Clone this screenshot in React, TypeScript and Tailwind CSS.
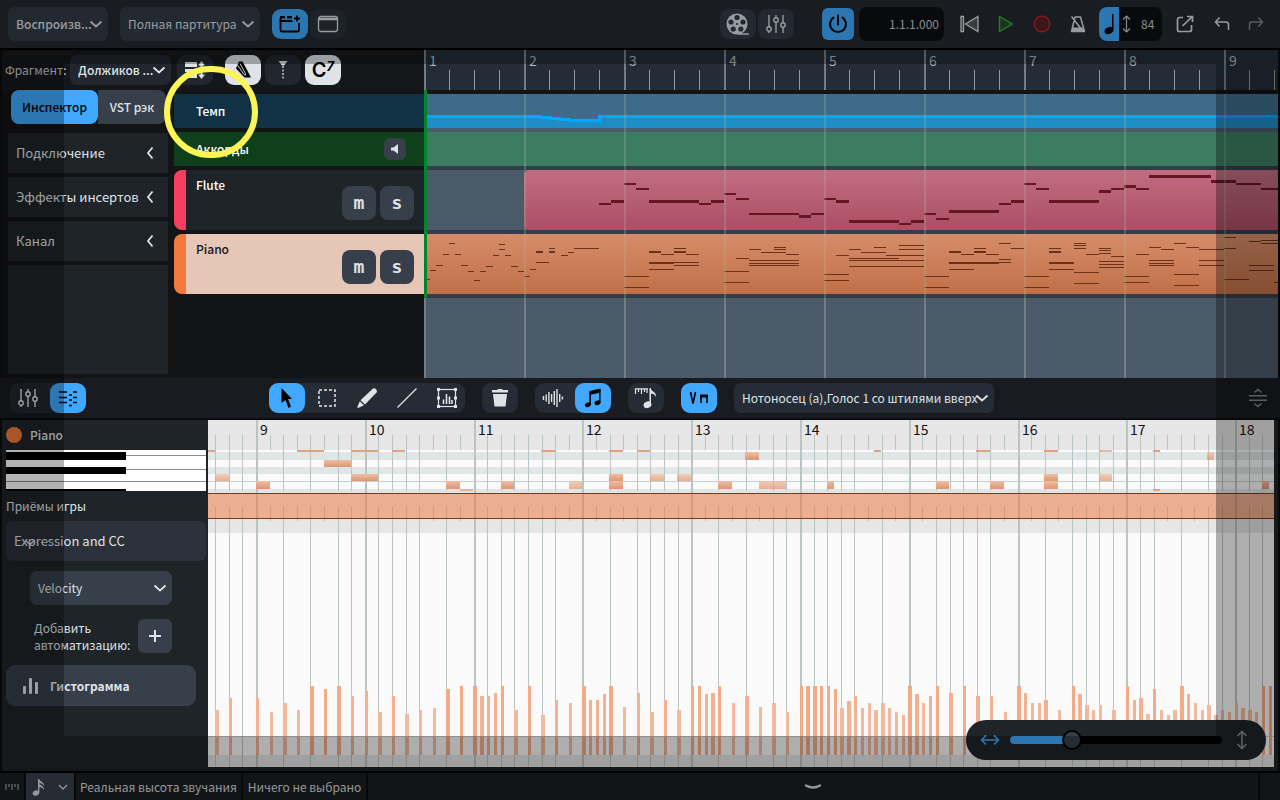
import React, { useState } from "react";

type Note = [number, number, number, number?];

const FLUTE: Note[] = [
  [599, 203, 12], [611, 200, 13, 3], [624, 183, 12], [636, 188, 13], [649, 200, 50, 3], [699, 203, 12],
  [711, 200, 13, 3], [724, 193, 12], [736, 198, 13], [749, 213, 50], [799, 215, 12, 3], [811, 213, 13],
  [824, 198, 12], [836, 200, 13, 3], [849, 220, 50, 3], [899, 223, 12], [911, 220, 13, 3], [924, 213, 12],
  [936, 218, 13], [949, 210, 50, 3], [999, 203, 12], [1011, 200, 13, 3], [1024, 183, 12], [1036, 188, 13],
  [1049, 200, 50, 3], [1099, 190, 12, 3], [1111, 188, 13], [1124, 185, 12, 3], [1136, 188, 13],
  [1149, 175, 62, 3], [1211, 180, 25, 3], [1236, 183, 25], [1261, 188, 17],
];

const PIANO: Note[] = [
  [427, 279, 3], [430, 270, 6], [436, 265, 7], [443, 254, 6], [449, 243, 6], [455, 254, 6], [461, 265, 7],
  [468, 271, 6], [474, 280, 6], [480, 271, 6], [486, 266, 7], [493, 255, 6], [499, 244, 6], [499, 249, 6],
  [505, 255, 6], [511, 266, 7], [518, 271, 6], [524, 276, 6], [530, 269, 6], [536, 251, 7, 2], [536, 262, 13],
  [549, 248, 6], [549, 251, 6, 2], [561, 255, 7], [568, 252, 6], [574, 248, 25], [624, 276, 25], [624, 287, 25],
  [649, 251, 12, 2], [661, 254, 13], [674, 248, 12], [674, 251, 12, 2], [686, 254, 13], [649, 262, 25, 2],
  [674, 262, 25], [674, 265, 25], [649, 269, 25], [724, 271, 25], [724, 282, 25], [736, 258, 13], [749, 249, 12],
  [761, 252, 25], [774, 247, 12], [774, 249, 12], [786, 254, 13], [749, 260, 50], [749, 263, 50], [749, 265, 50],
  [824, 274, 25], [824, 280, 25], [836, 255, 13], [849, 249, 12], [849, 258, 50], [849, 260, 75], [849, 266, 75],
  [874, 247, 12], [861, 252, 25], [886, 255, 38], [899, 245, 25], [899, 249, 25], [924, 276, 25], [924, 287, 25],
  [949, 251, 12, 2], [961, 254, 13], [974, 248, 12], [974, 251, 12, 2], [986, 254, 13], [949, 262, 50, 2],
  [949, 269, 25], [999, 243, 12], [999, 259, 12], [999, 262, 12], [1011, 248, 13], [1024, 276, 25],
  [1024, 287, 25], [1049, 248, 12], [1049, 251, 12, 2], [1049, 262, 25, 2], [1049, 269, 25], [1074, 243, 12],
  [1074, 245, 12], [1074, 248, 12], [1086, 254, 13], [1074, 272, 25], [1074, 283, 25], [1099, 248, 12],
  [1099, 250, 12], [1099, 253, 12], [1111, 256, 13], [1099, 261, 25], [1099, 264, 25], [1099, 267, 25],
  [1124, 276, 25], [1124, 282, 25], [1136, 254, 13], [1149, 247, 12], [1161, 249, 13], [1174, 243, 12],
  [1186, 247, 13], [1149, 260, 25], [1149, 263, 25], [1149, 265, 25], [1174, 274, 25], [1174, 285, 25],
  [1199, 249, 25], [1199, 260, 25], [1199, 265, 25], [1224, 237, 12], [1224, 248, 12], [1224, 279, 25],
  [1249, 241, 12], [1261, 240, 17], [1261, 243, 17], [1249, 265, 25], [1249, 270, 25], [1274, 282, 4],
];

const ROLL: [number, number, number, number][] = [
  [208, 450, 7, 2], [297, 450, 27, 2], [351, 450, 27, 2], [392, 450, 13, 2], [324, 460, 27, 7], [215, 474, 14, 7],
  [256, 481, 14, 8], [351, 474, 27, 7], [446, 481, 14, 8], [460, 489, 13, 2], [501, 481, 13, 8], [541, 450, 14, 2],
  [609, 450, 14, 2], [637, 450, 13, 2], [874, 450, 7, 2], [745, 452, 14, 8], [569, 481, 13, 8], [609, 474, 14, 7],
  [609, 481, 14, 8], [650, 474, 14, 7], [677, 474, 14, 7], [718, 481, 14, 8], [759, 481, 27, 8], [827, 481, 7, 8],
  [976, 450, 14, 2], [1044, 450, 14, 2], [1099, 450, 13, 2], [1153, 450, 7, 2], [1153, 489, 7, 2], [1207, 452, 7, 8],
  [936, 481, 13, 8], [990, 481, 14, 8], [1044, 474, 14, 7], [1044, 481, 14, 8], [1099, 474, 13, 7], [1262, 481, 7, 8],
];
const SOFT = new Set([215, 569, 650, 677, 759, 1099, 1207, 460]);

// x, height, width
const BARS: [number, number, number?][] = [
  [215, 45, 4], [229, 57], [256, 57], [270, 43], [283, 52, 4], [297, 45], [310, 69, 4], [324, 66], [337, 69, 4],
  [351, 59], [365, 64], [378, 43, 4], [392, 59], [405, 41, 4], [419, 45], [433, 47], [446, 66, 4], [460, 69],
  [473, 69, 4], [480, 59, 4], [487, 59], [494, 62], [501, 69], [514, 45, 4], [528, 69], [541, 40, 4], [555, 55],
  [569, 52], [582, 69, 4], [589, 55], [596, 55], [603, 61], [609, 69, 4], [623, 48], [637, 62], [650, 43, 4],
  [664, 55], [677, 45, 4], [691, 69], [698, 69], [705, 61], [711, 62, 4], [718, 69], [732, 52], [745, 59, 4],
  [759, 48], [772, 52, 4], [786, 43], [800, 69], [806, 69, 4], [813, 69, 4], [820, 69], [827, 69], [834, 66],
  [840, 47, 4], [847, 54, 4], [854, 59], [861, 47], [868, 52], [874, 45, 4], [881, 52, 4], [888, 47], [895, 43],
  [902, 40], [908, 69, 4], [915, 61, 4], [922, 52], [929, 59], [936, 69], [949, 62, 4], [963, 69], [976, 59, 4],
  [990, 59], [1004, 43], [1017, 69, 4], [1024, 62], [1031, 52], [1038, 52], [1044, 55, 4], [1058, 45], [1072, 69],
  [1078, 61, 4], [1085, 50, 4], [1092, 45], [1099, 50], [1112, 45, 4], [1126, 69], [1133, 55], [1139, 57, 4],
  [1146, 41, 4], [1153, 66], [1160, 45], [1167, 40], [1173, 45, 4], [1180, 69, 4], [1187, 61], [1194, 52],
  [1201, 45], [1207, 50, 4], [1214, 40, 4], [1221, 45], [1228, 43], [1235, 52], [1241, 47, 4], [1248, 45, 4],
  [1255, 43], [1262, 69], [1269, 69],
];

const SHORT = new Set([1, 3, 5, 13, 15, 23, 25, 27, 33, 35, 37, 45, 47, 49, 55, 57, 59, 67, 69]);
const EIGHTHS = Array.from({ length: 78 }, (_, i) => i - 3).filter((k) => k % 8 !== 0);
const eighthX = (k: number) => Math.round(256 + 13.6 * k) - 208;
const barX = (j: number) => Math.round(256 + 108.8 * j) - 208;
const LOWER_BARS = [9, 10, 11, 12, 13, 14, 15, 16, 17, 18];
const UPPER_BARS = [1, 2, 3, 4, 5, 6, 7, 8, 9];

function Chevron({ className = "" }: { className?: string }) {
  return (
    <svg className={className} width="14" height="14" viewBox="0 0 14 14" fill="none" stroke="currentColor" strokeWidth="1.8" aria-hidden="true">
      <path d="M1.5 4.5 7 9.5l5.5-5" />
    </svg>
  );
}

function Drop({ label, text, className, chev }: { label: string; text: string; className: string; chev: string }) {
  return (
    <span className="relative flex shrink-0 items-center">
      <select aria-label={label} className={"appearance-none rounded-[7px] pl-2 text-xs outline-none " + className}>
        <option>{text}</option>
      </select>
      <Chevron className={"pointer-events-none absolute " + chev} />
    </span>
  );
}

function Btn({ label, className, children }: { label: string; className: string; children: React.ReactNode }) {
  return (
    <button type="button" aria-label={label} className={"flex h-[30px] w-9 shrink-0 items-center justify-center rounded-[9px] " + className}>
      {children}
    </button>
  );
}

function Mixer() {
  return (
    <svg width="20" height="20" viewBox="0 0 20 20" fill="none" stroke="currentColor" strokeWidth="1.4" aria-hidden="true">
      <path d="M3 1v12M3 17.500V19M10 1v3M10 8v11M17 1v8M17 13v6" />
      <circle cx="3" cy="15" r="2.200" />
      <circle cx="10" cy="6" r="2.200" />
      <circle cx="17" cy="11" r="2.200" />
    </svg>
  );
}

function Notes({ notes, top, color }: { notes: Note[]; top: number; color: string }) {
  return (
    <svg className="absolute inset-0 h-full w-full" shapeRendering="crispEdges" aria-hidden="true">
      {notes.map(([x, y, w, h], i) => (
        <rect key={i} x={x - 424} y={y - top} width={w} height={h ?? (top === 170 ? 2 : 1)} fill={color} />
      ))}
    </svg>
  );
}

function Header() {
  return (
    <header className="flex h-[50px] shrink-0 items-center border-b-2 border-black bg-[#242930] pl-2 pr-4 text-[#dcdfe4]">
      <Drop label="Режим" text="Воспроизв..." className="h-[34px] w-[100px] bg-[#313b45] font-medium" chev="right-[5px]" />
      <span className="ml-3">
        <Drop label="Макет" text="Полная партитура" className="h-[34px] w-[140px] bg-[#313b45]" chev="right-[5px]" />
      </span>
      <div className="ml-3 flex gap-[2px]">
        <Btn label="Вкладки" className="bg-[#40a9ff] text-black">
          <svg width="22" height="20" viewBox="0 0 22 20" fill="none" stroke="currentColor" strokeWidth="1.800" aria-hidden="true">
            <path d="M1.500 6.500v9.500a1.500 1.500 0 0 0 1.500 1.500h15.500a1.500 1.500 0 0 0 1.500-1.500V9M1 7h12.500M18 1.500v6M15 4.500h6" />
            <path d="M1 2h5v2.500H1zM8 2h5v2.500H8zM.6 4h1.800v3H.6z" fill="currentColor" stroke="none" />
          </svg>
        </Btn>
        <Btn label="Окно" className="bg-[#2b333b] text-[#dcdfe4]">
          <svg width="22" height="20" viewBox="0 0 22 20" fill="none" stroke="currentColor" strokeWidth="1.300" aria-hidden="true">
            <rect x="1.500" y="2.500" width="19" height="15" rx="2.500" />
            <path d="M2 5h18" strokeWidth="2.500" />
          </svg>
        </Btn>
      </div>
      <div className="ml-auto flex gap-[2px]">
        <Btn label="Видео" className="bg-[#313b45] text-[#dcdfe4]">
          <svg width="24" height="22" viewBox="0 0 24 22" aria-hidden="true">
            <circle cx="11" cy="11" r="10.500" fill="currentColor" />
            <path d="M12 21h11" stroke="currentColor" strokeWidth="1.500" />
            <g fill="#313b45">
              <circle cx="11" cy="4.500" r="2.600" /><circle cx="17" cy="9" r="2.600" /><circle cx="14.800" cy="16" r="2.600" />
              <circle cx="7.200" cy="16" r="2.600" /><circle cx="5" cy="9" r="2.600" /><circle cx="11" cy="11" r="1.100" />
            </g>
          </svg>
        </Btn>
        <Btn label="Микшер" className="bg-[#313b45] text-[#dcdfe4]"><Mixer /></Btn>
      </div>
      <button type="button" aria-label="Активировать" className="ml-7 flex h-8 w-8 items-center justify-center rounded-md bg-[#40a9ff] text-black">
        <svg width="20" height="20" viewBox="0 0 20 20" fill="none" stroke="currentColor" strokeWidth="2" strokeLinecap="round" aria-hidden="true">
          <path d="M10 1.500v9M5.500 3.500a8 8 0 1 0 9 0" />
        </svg>
      </button>
      <output className="ml-[5px] flex h-[34px] w-[85px] items-center justify-end rounded-lg bg-[#0d0f10] pr-[5px] text-xs text-[#c4c8cf]">1.1.1.000</output>
      <div className="ml-4 flex items-center gap-[19px]">
        <button type="button" aria-label="В начало">
          <svg width="19" height="18" viewBox="0 0 19 18" fill="#555" stroke="#dcdfe4" strokeWidth="1.300" aria-hidden="true">
            <path d="M1 1.500h2.500v15H1zM18 1.500v15L5.500 9z" />
          </svg>
        </button>
        <button type="button" aria-label="Воспроизвести">
          <svg width="16" height="18" viewBox="0 0 16 18" fill="#2b4a2d" stroke="#22c436" strokeWidth="1.400" strokeLinejoin="round" aria-hidden="true">
            <path d="M1.500 1.500v15L14.500 9z" />
          </svg>
        </button>
        <button type="button" aria-label="Запись">
          <svg width="18" height="18" viewBox="0 0 18 18" aria-hidden="true">
            <circle cx="9" cy="9" r="7.800" fill="#552229" stroke="#d31e24" strokeWidth="1.300" />
          </svg>
        </button>
        <button type="button" aria-label="Метроном">
          <svg width="16" height="18" viewBox="0 0 16 18" fill="none" stroke="#dcdfe4" strokeWidth="1.500" strokeLinejoin="round" aria-hidden="true">
            <path d="M5 2h5.500L14.500 16.500H1.500zM1.500 1.500 10.500 13" />
            <path d="M2.500 12.500h11l1 4H1.500z" fill="#dcdfe4" stroke="none" />
          </svg>
        </button>
      </div>
      <div className="ml-[13px] flex h-[34px] w-[63px] items-center rounded-lg bg-[#0d0f10] text-[#c4c8cf]">
        <button type="button" aria-label="Длительность" className="flex h-full w-5 items-center justify-center rounded-l-lg bg-[#40a9ff]">
          <svg width="12" height="22" viewBox="0 0 12 22" aria-hidden="true">
            <path d="M9.800 1v16" stroke="#000" strokeWidth="1.400" />
            <ellipse cx="6" cy="17.500" rx="4.600" ry="3.400" transform="rotate(-25 6 17.500)" />
          </svg>
        </button>
        <svg className="ml-[3px]" width="9" height="18" viewBox="0 0 9 18" fill="none" stroke="currentColor" strokeWidth="1.200" aria-hidden="true">
          <path d="M4.500 1v16M1 4.500 4.500 1 8 4.500M1 13.500 4.500 17 8 13.500" />
        </svg>
        <span className="ml-[10px] text-xs">84</span>
      </div>
      <div className="ml-[14px] flex items-center text-[#dcdfe4]">
        <button type="button" aria-label="Открыть" className="mr-5">
          <svg width="18" height="18" viewBox="0 0 18 18" fill="none" stroke="currentColor" strokeWidth="1.700" aria-hidden="true">
            <path d="M7 2.500H3.500a2 2 0 0 0-2 2v10a2 2 0 0 0 2 2h10a2 2 0 0 0 2-2V10M6.500 11 16 1.800M11 1.500h5.500V7" />
          </svg>
        </button>
        <button type="button" aria-label="Отменить" className="mr-[18px]">
          <svg width="16" height="16" viewBox="0 0 16 16" fill="none" stroke="currentColor" strokeWidth="1.500" aria-hidden="true">
            <path d="M5.500 1.500 1.500 6l4 4.500M1.500 6h10.500a2.500 2.500 0 0 1 2.500 2.500V14" />
          </svg>
        </button>
        <button type="button" aria-label="Повторить" className="text-[#82868c]">
          <svg width="16" height="16" viewBox="0 0 16 16" fill="none" stroke="currentColor" strokeWidth="1.500" aria-hidden="true">
            <path d="M10.500 1.500 14.500 6l-4 4.500M14.500 6H4a2.500 2.500 0 0 0-2.500 2.500V14" />
          </svg>
        </button>
      </div>
    </header>
  );
}

function Inspector() {
  return (
    <aside className="flex w-[160px] shrink-0 flex-col gap-1 text-[13px] text-[#dfe3e8]">
      <div className="mb-[5px] ml-[3px] flex h-[34px] w-[155px] text-xs font-medium">
        <button type="button" className="w-[87px] rounded-lg bg-[#40a9ff] text-black">Инспектор</button>
        <button type="button" className="flex-1 rounded-r-lg bg-[#373f4b]">VST рэк</button>
      </div>
      {["Подключение", "Эффекты инсертов", "Канал"].map((t) => (
        <button key={t} type="button" className="flex h-10 items-center justify-between whitespace-nowrap bg-[#1f2428] pl-2 pr-3">
          {t}
          <svg width="12" height="14" viewBox="0 0 12 14" fill="none" stroke="currentColor" strokeWidth="1.800" aria-hidden="true"><path d="M8.500 1.500 4 7l4.500 5.500" /></svg>
        </button>
      ))}
      <div className="mb-1 flex-1 bg-[#1f2428]" />
    </aside>
  );
}

function Track({ name, accent, body }: { name: string; accent: string; body: string }) {
  return (
    <div className="flex h-[60px]">
      <div className={"w-3 rounded-l-lg " + accent} />
      <div className={"flex flex-1 justify-between pl-[10px] pr-[10px] " + body}>
        <span className="pt-[5px]">{name}</span>
        <span className="flex gap-1 pt-4">
          {["m", "s"].map((c) => (
            <button key={c} type="button" aria-label={(c === "m" ? "Заглушить " : "Соло ") + name} className="flex h-[34px] w-[34px] items-center justify-center rounded-lg bg-[#373f4b] font-['DejaVu_Sans_Mono',monospace] text-[18px] font-bold leading-5 text-[#dfe3e8]">
              {c}
            </button>
          ))}
        </span>
      </div>
    </div>
  );
}

function Arranger() {
  return (
    <section className="flex h-[328px] shrink-0 pl-[2px] pr-[2px]">
      <div className="flex w-[422px] shrink-0 flex-col bg-[#131416]">
        <div className="flex h-10 shrink-0 items-center bg-[#15171b] pl-[3px] text-[#dfe3e8]">
          <label htmlFor="flow" className="w-[65px] whitespace-nowrap text-xs text-[#c9ccd1]">Фрагмент:</label>
          <span className="relative flex shrink-0 items-center">
            <select id="flow" className="h-[30px] w-[101px] appearance-none rounded-[7px] bg-[#22262e] pl-2 text-xs font-medium outline-none">
              <option>Должиков ...</option>
            </select>
            <Chevron className="pointer-events-none absolute right-[5px]" />
          </span>
          <Btn label="Высота дорожек" className="ml-[6px] bg-[#22262e]">
            <svg width="22" height="20" viewBox="0 0 22 20" fill="currentColor" aria-hidden="true">
              <path d="M1 2h12v5H1zM1 9h12v3H1zM1 14h12v4H1z" />
              <path d="M17.500 1 21 5.500h-2.500v9H21L17.500 19 14 14.500h2.500v-9H14z" />
            </svg>
          </Btn>
          <div className="ml-3 flex gap-1">
            <Btn label="Метки" className="bg-[#dfe3e8] text-black">
              <svg width="20" height="20" viewBox="0 0 20 20" aria-hidden="true">
                <path d="M6 1.500h3.500L18 17.500h-6.500L3 8.500z" fill="#000" />
                <path d="M4.500 5l6.500 9.500q2 1.500 1.500-.8L7 3.500" fill="none" stroke="#dfe3e8" strokeWidth=".9" />
              </svg>
            </Btn>
            <Btn label="Маркеры" className="bg-[#22262e]">
              <svg width="12" height="20" viewBox="0 0 12 20" fill="currentColor" aria-hidden="true">
                <path d="M1.500 1h9L7 5.500H5z" />
                <path d="M6 6v13" stroke="currentColor" strokeWidth="1.300" strokeDasharray="2 1.500" />
              </svg>
            </Btn>
            <Btn label="Аккорды" className="bg-[#dfe3e8] text-black">
              <span className="flex font-['Inter',sans-serif] text-[20px] font-semibold leading-6">
                C<span className="text-[13px] font-bold italic leading-4">7</span>
              </span>
            </Btn>
          </div>
        </div>
        <div className="flex flex-1 gap-[6px] pl-[6px]">
          <Inspector />
          <div className="flex flex-1 flex-col gap-1 pt-1 text-xs font-medium leading-5 text-white">
            <div className="flex h-[34px] items-center bg-[#103244] pl-[22px]">Темп</div>
            <div className="flex h-[34px] items-center justify-between bg-[#10401b] pl-[22px] pr-[18px]">
              Аккорды
              <button type="button" aria-label="Звук аккордов" className="flex h-[22px] w-[22px] items-center justify-center rounded-md bg-[#373f4b]">
                <svg width="10" height="10" viewBox="0 0 10 10" fill="#dfe3e8" aria-hidden="true"><path d="M1 3.500h2.500L8 0v10L3.500 6.500H1z" /></svg>
              </button>
            </div>
            <Track name="Flute" accent="bg-[#f43f5e]" body="bg-[#1f2428]" />
            <Track name="Piano" accent="bg-[#f27a3f]" body="bg-[#e5c6b7] text-[#151515]" />
          </div>
        </div>
      </div>
      <div className="relative flex flex-1 flex-col overflow-hidden bg-[#4b5a69]">
        <div className="h-10 bg-[#242d37]" />
        <div className="h-1 bg-[#131416]" />
        <div className="relative h-[34px] bg-[#3d6b89]">
          <svg className="absolute inset-0 h-full w-full" shapeRendering="crispEdges" aria-hidden="true">
            <path d="M0 23H116v1h10v1h9v1h10v1h30v-4H2000V34H0z" fill="#1e8dc6" />
            <path d="M0 22.500H116v1h10v1h9v1h10v1h30v-4H2000" fill="none" stroke="#00a8ff" strokeWidth="3" />
          </svg>
        </div>
        <div className="h-1 bg-[#4c5b6d]" />
        <div className="h-[34px] bg-[#3c7d61]" />
        <div className="h-1 bg-[#343e4b]" />
        <div className="relative h-[60px]">
          <div className="ml-[100px] h-full rounded-l-[5px] bg-linear-to-b from-[#c16d81] to-[#ac4e64]" />
          <Notes notes={FLUTE} top={170} color="#641621" />
        </div>
        <div className="h-1 bg-[#343e4b]" />
        <div className="relative h-[60px] bg-linear-to-b from-[#d68c69] to-[#c17048]">
          <Notes notes={PIANO} top={234} color="#6b3218" />
        </div>
        <div className="h-1 bg-[#343e4b]" />
        <svg className="absolute inset-0 h-full w-full" shapeRendering="crispEdges">
          {UPPER_BARS.map((n) => (
            <g key={n}>
              <rect x={(n - 1) * 100} y="0" width="2" height="40" fill="#747d83" />
              <rect x={(n - 1) * 100} y="44" width="2" height="204" fill="#a6b79a" fillOpacity=".3" />
              <rect x={(n - 1) * 100} y="248" width="2" height="80" fill="#747d83" />
              {[25, 50, 75].map((d) => (
                <rect key={d} x={(n - 1) * 100 + d} y="20" width="1" height="20" fill="#929a9f" />
              ))}
              <text x={(n - 1) * 100 + 5} y="16" fontSize="14" fill="#b1b6ba">{n}</text>
            </g>
          ))}
          <rect x="0" y="40" width="3" height="208" fill="#00862a" />
        </svg>
      </div>
    </section>
  );
}

function EditorToolbar() {
  const idle = "text-[#dfe3e8]";
  const on = "bg-[#40a9ff] text-black";
  return (
    <div className="flex h-[42px] shrink-0 items-center border-b-2 border-[#0b0c0d] bg-[#181b20] pl-[10px] pr-3">
      <div className="flex gap-1 rounded-[9px] bg-[#22272e]">
        <Btn label="Микшер" className={idle}><Mixer /></Btn>
        <Btn label="Редактор клавиш" className={on}>
          <svg width="20" height="18" viewBox="0 0 20 18" stroke="currentColor" strokeWidth="1.500" aria-hidden="true">
            <path d="M1 3h8M1 8.500h8M1 13.500h8M15 3h4M11 6h3M15 8.500h4M11 11h3M15 13.500h4M11 16.500h3" />
          </svg>
        </Btn>
      </div>
      <div className="ml-[183px] flex gap-1 rounded-[9px] bg-[#262c35]">
        <Btn label="Выделение" className={on}>
          <svg width="14" height="20" viewBox="0 0 14 20" fill="currentColor" aria-hidden="true"><path d="M1.500 0 12 11H8l3 7.500L8.500 20 5.500 12l-4 3z" /></svg>
        </Btn>
        <Btn label="Рамка" className={idle}>
          <svg width="20" height="20" viewBox="0 0 20 20" fill="none" stroke="currentColor" strokeWidth="1.500" strokeDasharray="3 2" aria-hidden="true"><rect x="2" y="2" width="16" height="16" /></svg>
        </Btn>
        <Btn label="Карандаш" className={idle}>
          <svg width="22" height="22" viewBox="0 0 22 22" fill="currentColor" aria-hidden="true"><path d="M17 1.500q1.500-.8 3 .8t.8 3L9 17.500l-4.500-4.300zM3.800 14.200l4.200 4.100-5.800 2.600q-1.200 0-.7-1.300z" /></svg>
        </Btn>
        <Btn label="Линия" className={idle}>
          <svg width="20" height="20" viewBox="0 0 20 20" stroke="currentColor" strokeWidth="1.300" aria-hidden="true"><path d="M.5 19.500 19.500.5" /></svg>
        </Btn>
        <Btn label="Преобразование" className={idle}>
          <svg width="22" height="22" viewBox="0 0 22 22" fill="none" stroke="currentColor" strokeWidth="1.200" aria-hidden="true">
            <rect x="2.500" y="2.500" width="17" height="17" />
            <path d="M7.500 12.500V17M10.500 7v10M13.500 9.500V17M16 13v4" strokeWidth="1.600" />
            <path d="M1 1h3v3H1zM18 1h3v3h-3zM1 18h3v3H1zM18 18h3v3h-3zM1 9.500h3v3H1zM18 9.500h3v3h-3z" fill="currentColor" stroke="none" />
          </svg>
        </Btn>
      </div>
      <Btn label="Удалить" className="ml-[17px] bg-[#262c35] text-[#dfe3e8]">
        <svg width="18" height="20" viewBox="0 0 18 20" fill="currentColor" aria-hidden="true"><path d="M6.500 1h5v1H17v2.500H1V2h5.500zM2 6h14l-1.500 12.500H3.500z" /></svg>
      </Btn>
      <div className="ml-[17px] flex gap-1 rounded-[9px] bg-[#262c35]">
        <Btn label="Звук" className={idle}>
          <svg width="22" height="20" viewBox="0 0 22 20" stroke="currentColor" strokeWidth="1.400" aria-hidden="true">
            <path d="M1.500 8v4M4.200 6.500v7M6.900 4v12M9.600 6v8M12.300 3v14M15 1v18M17.700 6v8M20.400 8.500v3" />
          </svg>
        </Btn>
        <Btn label="Ноты" className={on}>
          <svg width="18" height="20" viewBox="0 0 18 20" fill="currentColor" aria-hidden="true">
            <path d="M5.500 3 16.500.5v4L5.500 7z" />
            <path d="M6.200 4v12.500M15.800 2v12.500" stroke="currentColor" strokeWidth="1.500" />
            <ellipse cx="3.900" cy="16.800" rx="3.100" ry="2.300" transform="rotate(-20 3.900 16.800)" />
            <ellipse cx="13.500" cy="14.800" rx="3.100" ry="2.300" transform="rotate(-20 13.500 14.800)" />
          </svg>
        </Btn>
      </div>
      <Btn label="Квантизация" className="ml-[17px] bg-[#262c35] text-[#dfe3e8]">
        <svg width="24" height="22" viewBox="0 0 24 22" fill="currentColor" aria-hidden="true">
          <path d="M1.500 7V1.800H14M4.500 2v3M7.500 2v5M10.500 2v3M13 2v4" fill="none" stroke="currentColor" strokeWidth="1.200" />
          <path d="M17 1v17h-1.500V1zM16.500 1c1 4 6 3.500 5.500 9-1-2.500-3-3.500-5.500-3.500z" />
          <ellipse cx="13.500" cy="17.800" rx="4" ry="3.200" transform="rotate(-20 13.500 17.800)" />
        </svg>
      </Btn>
      <Btn label="Штрихи" className="ml-[17px] bg-[#40a9ff] text-black">
        <svg width="20" height="14" viewBox="0 0 20 14" fill="none" stroke="currentColor" strokeWidth="1.600" aria-hidden="true">
          <path d="M1.500 1 4 12.500 6.500 1" />
          <path d="M12 12V5h6v7" />
          <path d="M11.200 3.500h7.600v3h-7.600z" fill="currentColor" stroke="none" />
        </svg>
      </Btn>
      <span className="ml-[17px] text-[#dfe3e8]">
        <Drop label="Голос" text="Нотоносец (a),Голос 1 со штилями вверх" className="h-[30px] w-[260px] bg-[#262c35]" chev="right-[5px]" />
      </span>
      <button type="button" aria-label="Размер панели" className="ml-auto text-[#82868c]">
        <svg width="20" height="20" viewBox="0 0 20 20" fill="none" stroke="currentColor" strokeWidth="1.600" aria-hidden="true">
          <path d="M1 7.800h18M1 12.200h18M6.500 4.500 10 1.500l3.500 3M6.500 15.500l3.500 3 3.500-3" />
        </svg>
      </button>
    </div>
  );
}

function EditorSide() {
  return (
    <aside className="flex w-[206px] shrink-0 flex-col bg-[#1f2428] pl-1 pr-[2px] text-xs text-[#dfe3e8]">
      <div className="flex h-[30px] items-center gap-2 font-medium">
        <span className="h-4 w-4 rounded-full bg-[#f07a3c]" />
        Piano
      </div>
      <svg className="h-[41px] w-full bg-white" shapeRendering="crispEdges" aria-hidden="true">
        <path d="M120 5h80v1h-80zM120 19h80v1h-80zM0 31h200v1H0z" fill="#8a8a8a" />
        <path d="M0 2h120v8H0zM0 17h120v7H0zM0 39h120v2H0z" fill="#000" />
      </svg>
      <h2 className="flex h-[30px] items-center">Приёмы игры</h2>
      <button type="button" className="relative flex h-10 items-center rounded-md bg-[#2b313a] pl-2 text-[13px]">
        Expression and CC
        <svg className="absolute left-[18px] top-[17px]" width="12" height="10" viewBox="0 0 12 10" fill="none" stroke="currentColor" strokeWidth="1.500" aria-hidden="true"><path d="m1.500 2.500 4.500 4 4.500-4" /></svg>
      </button>
      <div className="ml-6 mt-[10px] w-[142px]">
        <Drop label="Параметр" text="Velocity" className="h-[34px] w-full bg-[#373f4b]" chev="right-[5px]" />
        <div className="mt-[14px] flex h-[34px] items-center justify-between pl-1">
          <label htmlFor="add" className="whitespace-nowrap leading-[17px]">Добавить<br />автоматизацию:</label>
          <button id="add" type="button" aria-label="Добавить" className="flex h-[34px] w-[34px] shrink-0 items-center justify-center rounded-md bg-[#373f4b]">
            <svg width="14" height="14" viewBox="0 0 14 14" stroke="currentColor" strokeWidth="2" aria-hidden="true"><path d="M7 1v12M1 7h12" /></svg>
          </button>
        </div>
      </div>
      <button type="button" className="mr-[10px] mt-3 flex h-[41px] items-center gap-[11px] rounded-[9px] bg-[#373f4b] pl-4 text-xs font-bold">
        <svg width="17" height="18" viewBox="0 0 17 18" fill="currentColor" aria-hidden="true">
          <rect x="1" y="9" width="3" height="8" rx="1" /><rect x="7" y="1" width="3" height="16" rx="1" /><rect x="13" y="5" width="3" height="12" rx="1" />
        </svg>
        Гистограмма
      </button>
    </aside>
  );
}

function Zoomer() {
  const [v, setV] = useState(27);
  return (
    <div className="absolute bottom-[7px] right-2 flex h-10 w-[300px] items-center rounded-full bg-[#1f2428] pl-[14px] pr-[18px]">
      <svg width="20" height="12" viewBox="0 0 20 12" fill="none" stroke="#40a9ff" strokeWidth="1.600" aria-hidden="true">
        <path d="M1.500 6h17M6 1.500 1.500 6 6 10.500M14 1.500 18.500 6 14 10.500" />
      </svg>
      <input
        type="range"
        aria-label="Масштаб"
        value={v}
        onChange={(e) => setV(Number(e.target.value))}
        style={{ backgroundImage: `linear-gradient(to right, #40a9ff ${v}%, #000 ${v}%)` }}
        className="ml-[10px] h-2 min-w-0 flex-1 appearance-none rounded-full [&::-webkit-slider-thumb]:h-5 [&::-webkit-slider-thumb]:w-5 [&::-webkit-slider-thumb]:appearance-none [&::-webkit-slider-thumb]:rounded-full [&::-webkit-slider-thumb]:border-2 [&::-webkit-slider-thumb]:border-solid [&::-webkit-slider-thumb]:border-black [&::-webkit-slider-thumb]:bg-[#373f4b]"
      />
      <svg className="ml-[14px]" width="12" height="20" viewBox="0 0 12 20" fill="none" stroke="#82868c" strokeWidth="1.600" aria-hidden="true">
        <path d="M6 1.500v17M1.500 6 6 1.500 10.500 6M1.500 14 6 18.500l4.500-4.500" />
      </svg>
    </div>
  );
}

function Roll() {
  return (
    <div className="relative flex flex-1 flex-col overflow-hidden bg-[#fafafa]">
      <div className="h-[30px] bg-[#e6e6e6]" />
      <div className="h-[2px]" />
      <div className="h-2 bg-[#e0e6e6]" />
      <div className="h-[7px]" />
      <div className="h-[7px] bg-[#e0e6e6]" />
      <div className="h-[7px]" />
      <div className="h-px bg-[#c9cece]" />
      <div className="h-[7px]" />
      <div className="h-1 bg-[#e0e6e6]" />
      <div className="h-[26px] border-y border-[#7c3b1c] bg-[#ecae90]" />
      <div className="h-[14px] bg-[#e6e6e6]" />
      <div className="flex-1" />
      <div className="h-[31px] border-t border-[#c9cece]" />
      <div className="absolute inset-x-0 bottom-0 h-3 bg-[#e6e6e6]" />
      <svg className="absolute inset-0 h-full w-full" shapeRendering="crispEdges">
        <defs>
          <linearGradient id="note" x1="0" y1="0" x2="0" y2="1">
            <stop offset="0" stopColor="#f1bda3" />
            <stop offset="1" stopColor="#dc9672" />
          </linearGradient>
        </defs>
        {EIGHTHS.map((k) => (
          <g key={k} fill="#b9c5c5">
            <rect x={eighthX(k)} y="15" width="1" height={SHORT.has(k) ? 15 : 56} />
            <rect x={eighthX(k)} y="86" width="1" height="12" fill="#d59b7c" />
            <rect x={eighthX(k)} y="99" width="1" height={SHORT.has(k) ? 2 : "100%"} />
          </g>
        ))}
        {LOWER_BARS.map((n, j) => (
          <g key={n} fill="#b9c5c5">
            <rect x={barX(j)} y="0" width="2" height="73" />
            <rect x={barX(j)} y="74" width="2" height="24" fill="#d59b7c" />
            <rect x={barX(j)} y="99" width="2" height="100%" />
            <text x={barX(j) + 4} y="15" fontSize="14" fill="#111">{n}</text>
          </g>
        ))}
        {ROLL.map(([x, y, w, h], i) => (
          <rect key={i} x={x - 208} y={y - 420} width={w} height={h} fill={h === 2 ? "#e2a280" : "url(#note)"} opacity={SOFT.has(x) ? 0.75 : 1} />
        ))}
      </svg>
      <svg className="absolute inset-x-0 bottom-3 h-[70px] w-full" shapeRendering="crispEdges" aria-hidden="true">
        {BARS.map(([x, h, w]) => (
          <rect key={x} x={x - 208} y={70 - h} width={w ?? 3} height={h} fill={h > 65 ? "#f3ab87" : h > 52 ? "#f3b191" : "#f2b99c"} />
        ))}
      </svg>
      <Zoomer />
    </div>
  );
}

function StatusBar() {
  return (
    <footer className="flex h-[29px] shrink-0 gap-[2px] border-t-2 border-black bg-[#0c0d0e] text-xs text-[#d5d8dc]">
      <div className="flex w-6 items-center justify-center bg-[#1a1f22]">
        <svg width="14" height="8" viewBox="0 0 14 8" stroke="#b5b9be" aria-hidden="true"><path d="M1 1v6M4 1v3M7 1v6M10 1v3M13 1v6" /></svg>
      </div>
      <button type="button" aria-label="Сетка" className="flex w-12 items-center justify-between bg-[#353f4a] px-[6px]">
        <svg width="14" height="18" viewBox="0 0 14 18" fill="#d5d8dc" aria-hidden="true">
          <path d="M6 1h1.400v13.500H6zM7 1c1 3 5.500 2.500 5 7C11 6 9.500 5 7 5zM7 5c1 3 5.500 2.500 5 7-1-2-2.500-3-5-3z" />
          <ellipse cx="4" cy="15" rx="3.400" ry="2.600" transform="rotate(-20 4 15)" />
        </svg>
        <svg width="10" height="8" viewBox="0 0 10 8" fill="none" stroke="#d5d8dc" strokeWidth="1.300" aria-hidden="true"><path d="M1 2l4 4 4-4" /></svg>
      </button>
      <div className="flex w-[165px] items-center justify-center whitespace-nowrap bg-[#1a1f22]">Реальная высота звучания</div>
      <div className="flex w-[123px] items-center justify-center whitespace-nowrap bg-[#1a1f22]">Ничего не выбрано</div>
      <div className="flex flex-1 items-center justify-center bg-[#1a1f22]">
        <svg width="18" height="6" viewBox="0 0 18 6" fill="none" stroke="#d5d8dc" strokeWidth="2.400" strokeLinecap="round" aria-hidden="true"><path d="M2 1.500q7 4 14 0" /></svg>
      </div>
      <div className="w-5 bg-[#1a1f22]" />
    </footer>
  );
}

export default function App() {
  return (
    <div className="relative flex min-h-screen flex-col overflow-hidden bg-[#0b0c0d] font-['Noto_Sans_CJK_SC',sans-serif] leading-5">
      <Header />
      <Arranger />
      <EditorToolbar />
      <main className="flex min-h-[351px] flex-1 pl-[2px] pr-[2px]">
        <EditorSide />
        <div className="flex flex-1 bg-[#1f2428] pb-1 pr-1">
          <Roll />
        </div>
      </main>
      <StatusBar />
      <div className="pointer-events-none absolute inset-0 border-[64px] border-black/30" />
      <div className="pointer-events-none absolute left-[164px] top-[66px] h-[92px] w-[94px] rounded-full border-[6px] border-[#fdf455]" />
    </div>
  );
}
